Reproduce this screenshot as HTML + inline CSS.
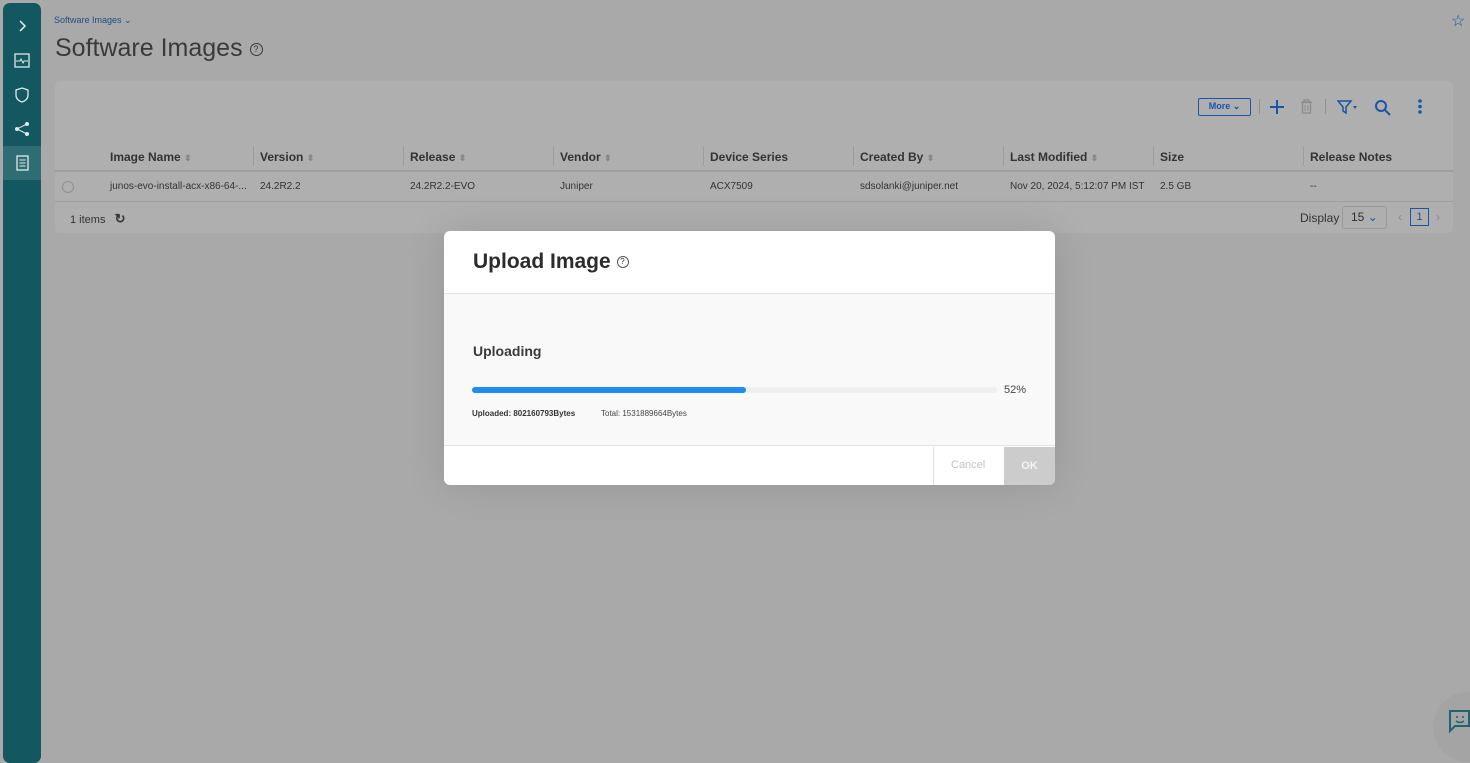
<!DOCTYPE html>
<html><head><style>
*{box-sizing:border-box;margin:0;padding:0}
body{width:1470px;height:746px;background:#a9a9a9;font-family:"Liberation Sans",sans-serif;position:relative;overflow:hidden;color:#2e2e2e}
.sb{position:absolute;left:3px;top:3px;width:38px;height:760px;background:#135760;border-radius:7px}
.sb .it{position:absolute;left:0;width:38px;height:34px;display:flex;align-items:center;justify-content:center}
.abs{position:absolute}
.card{position:absolute;left:55px;top:81px;width:1398px;height:152px;background:#afafaf;border-radius:5px}
.th{position:absolute;top:150px;font-size:12px;font-weight:bold;color:#333}
.td{position:absolute;top:181px;font-size:10px;color:#333}
.sep{position:absolute;top:146px;width:1px;height:20px;background:#9c9c9c}
.modal{position:absolute;left:444px;top:231px;width:611px;height:254px;background:#fff;border-radius:6px;overflow:hidden;box-shadow:0 0 40px rgba(0,0,0,.12)}
</style></head><body>
<div class="sb">
<div class="it" style="top:6px"><svg width="14" height="14"><path d="M5 2l5 5-5 5" stroke="#e6f0f0" stroke-width="1.5" fill="none"/></svg></div>
<div class="it" style="top:41px"><svg width="18" height="18"><rect x="2" y="2" width="14" height="13" stroke="#dfe9ea" fill="none" stroke-width="1.3"/><path d="M3 9h4l1-2 2 4 1-2h4" stroke="#dfe9ea" fill="none"/></svg></div>
<div class="it" style="top:75px"><svg width="18" height="18"><path d="M9 2l6 2v5c0 4-3 6-6 7-3-1-6-3-6-7V4z" stroke="#dfe9ea" fill="none" stroke-width="1.3"/></svg></div>
<div class="it" style="top:109px"><svg width="18" height="18"><circle cx="4" cy="9" r="2" fill="#dfe9ea"/><circle cx="14" cy="4" r="2" fill="#dfe9ea"/><circle cx="14" cy="14" r="2" fill="#dfe9ea"/><path d="M4 9L14 4M4 9l10 5" stroke="#dfe9ea"/></svg></div>
<div class="it" style="top:143px;background:#2f6d74"><svg width="18" height="18"><rect x="4" y="2" width="11" height="14" stroke="#dfe9ea" fill="none" stroke-width="1.3"/><path d="M6.5 6h6M6.5 9h6M6.5 12h6" stroke="#dfe9ea"/></svg></div>
</div>
<div class="abs" style="left:54px;top:15px;font-size:9px;color:#1f4d80">Software Images ⌄</div>
<div class="abs" style="left:55px;top:34px;font-size:25px;color:#3a3a3a">Software Images <span style="border:1.5px solid #3a3a3a;border-radius:50%;display:inline-block;width:13px;height:13px;line-height:11px;text-align:center;font-size:9px;vertical-align:middle">?</span></div>
<div class="abs" style="left:1451px;top:11px;font-size:16px;color:#1a55a8">☆</div>
<div class="card"></div>
<div class="abs" style="left:1198px;top:98px;width:53px;height:18px;border:1.3px solid #1a55a8;border-radius:2px;font-size:9px;font-weight:bold;color:#1a55a8;text-align:center;line-height:15px">More ⌄</div>
<div class="abs" style="left:1259px;top:99px;width:1px;height:15px;background:#8f8f8f"></div>
<svg class="abs" style="left:1269px;top:99px" width="16" height="16"><path d="M8 1v14M1 8h14" stroke="#1a55a8" stroke-width="2"/></svg>
<svg class="abs" style="left:1300px;top:99px" width="13" height="15"><path d="M1 3h11M4 3V1h5v2M2.5 3.5h8V14h-8z" stroke="#8c8c8c" stroke-width="1.3" fill="none"/><path d="M5 6v6M8 6v6" stroke="#8c8c8c"/></svg>
<div class="abs" style="left:1325px;top:99px;width:1px;height:15px;background:#8f8f8f"></div>
<svg class="abs" style="left:1337px;top:99px" width="22" height="16"><path d="M1 2h13L9 8v6L6 12V8z" stroke="#1a55a8" fill="none" stroke-width="1.5"/><path d="M16 7h4l-2 3z" fill="#1a55a8"/></svg>
<svg class="abs" style="left:1374px;top:99px" width="18" height="18"><circle cx="7" cy="7" r="5" stroke="#1a55a8" stroke-width="2" fill="none"/><path d="M11 11l5 5" stroke="#1a55a8" stroke-width="2"/></svg>
<svg class="abs" style="left:1417px;top:98px" width="6" height="18"><circle cx="3" cy="3" r="1.8" fill="#1a55a8"/><circle cx="3" cy="8.5" r="1.8" fill="#1a55a8"/><circle cx="3" cy="14" r="1.8" fill="#1a55a8"/></svg>
<div class="th" style="left:110px">Image Name <span style="color:#888;font-size:9px">⬍</span></div>
<div class="sep" style="left:253px"></div><div class="th" style="left:260px">Version <span style="color:#888;font-size:9px">⬍</span></div>
<div class="sep" style="left:403px"></div><div class="th" style="left:410px">Release <span style="color:#888;font-size:9px">⬍</span></div>
<div class="sep" style="left:553px"></div><div class="th" style="left:560px">Vendor <span style="color:#888;font-size:9px">⬍</span></div>
<div class="sep" style="left:703px"></div><div class="th" style="left:710px">Device Series</div>
<div class="sep" style="left:853px"></div><div class="th" style="left:860px">Created By <span style="color:#888;font-size:9px">⬍</span></div>
<div class="sep" style="left:1003px"></div><div class="th" style="left:1010px">Last Modified <span style="color:#888;font-size:9px">⬍</span></div>
<div class="sep" style="left:1153px"></div><div class="th" style="left:1160px">Size</div>
<div class="sep" style="left:1303px"></div><div class="th" style="left:1310px">Release Notes</div>
<div class="abs" style="left:55px;top:170px;width:1398px;height:2px;background:#9e9e9e"></div>
<div class="abs" style="left:55px;top:201px;width:1398px;height:1px;background:#9e9e9e"></div>
<div class="abs" style="left:62px;top:181px;width:12px;height:12px;border:1px solid #909090;border-radius:50%"></div>
<div class="td" style="left:110px">junos-evo-install-acx-x86-64-...</div>
<div class="td" style="left:260px">24.2R2.2</div>
<div class="td" style="left:410px">24.2R2.2-EVO</div>
<div class="td" style="left:560px">Juniper</div>
<div class="td" style="left:710px">ACX7509</div>
<div class="td" style="left:860px">sdsolanki@juniper.net</div>
<div class="td" style="left:1010px">Nov 20, 2024, 5:12:07 PM IST</div>
<div class="td" style="left:1160px">2.5 GB</div>
<div class="td" style="left:1310px">--</div>
<div class="abs" style="left:70px;top:211px;font-size:11px;color:#333">1 items &nbsp; <b style="font-size:13px">↻</b></div>
<div class="abs" style="left:1300px;top:211px;font-size:12px;color:#333">Display</div>
<div class="abs" style="left:1342px;top:206px;width:45px;height:23px;border:1px solid #999;border-radius:3px;font-size:12px;line-height:21px;padding-left:8px">15 <span style="color:#1a55a8">⌄</span></div>
<div class="abs" style="left:1398px;top:210px;font-size:12px;color:#888">‹</div>
<div class="abs" style="left:1410px;top:208px;width:19px;height:18px;border:1.3px solid #1a55a8;font-size:11px;text-align:center;line-height:16px;color:#1a55a8">1</div>
<div class="abs" style="left:1436px;top:210px;font-size:12px;color:#888">›</div>
<div class="abs" style="left:1433px;top:692px;width:70px;height:70px;border-radius:50%;background:#a4a4a4"></div>
<svg class="abs" style="left:1448px;top:710px" width="22" height="24"><path d="M1 1h20v15H7l-5 5V1" stroke="#1c6670" stroke-width="2" fill="none"/><circle cx="9" cy="7" r="1" fill="#1c6670"/><circle cx="15" cy="7" r="1" fill="#1c6670"/><path d="M8 11q4 3 8 0" stroke="#1c6670" fill="none" stroke-width="1.5"/></svg>
<div class="modal">
<div class="abs" style="left:29px;top:19px;font-size:21px;font-weight:bold;color:#2c2c2c">Upload Image <span style="display:inline-block;width:12px;height:12px;border:1px solid #555;border-radius:50%;font-size:8px;line-height:10px;text-align:center;font-weight:normal;vertical-align:middle">?</span></div>
<div class="abs" style="left:0;top:62px;width:611px;height:153px;background:#f9f9f9;border-top:1px solid #e2e2e2;border-bottom:1px solid #e2e2e2"></div>
<div class="abs" style="left:29px;top:112px;font-size:14px;font-weight:bold;color:#3a3a3a">Uploading</div>
<div class="abs" style="left:28px;top:156px;width:525px;height:6px;background:#efefef;border-radius:3px"></div>
<div class="abs" style="left:28px;top:156px;width:274px;height:6px;background:#1d8cf5;border-radius:3px"></div>
<div class="abs" style="left:560px;top:153px;font-size:11px;color:#444">52%</div>
<div class="abs" style="left:28px;top:178px;font-size:8px;font-weight:bold;color:#333">Uploaded: 802160793Bytes</div>
<div class="abs" style="left:157px;top:178px;font-size:8px;color:#444">Total: 1531889664Bytes</div>
<div class="abs" style="left:489px;top:216px;width:1px;height:38px;background:#e2e2e2"></div>
<div class="abs" style="left:507px;top:228px;font-size:11px;color:#c4c4c4">Cancel</div>
<div class="abs" style="left:560px;top:216px;width:51px;height:38px;background:#cccccc;color:#f3f3f3;font-size:11px;font-weight:bold;text-align:center;line-height:38px">OK</div>
</div>
</body></html>
